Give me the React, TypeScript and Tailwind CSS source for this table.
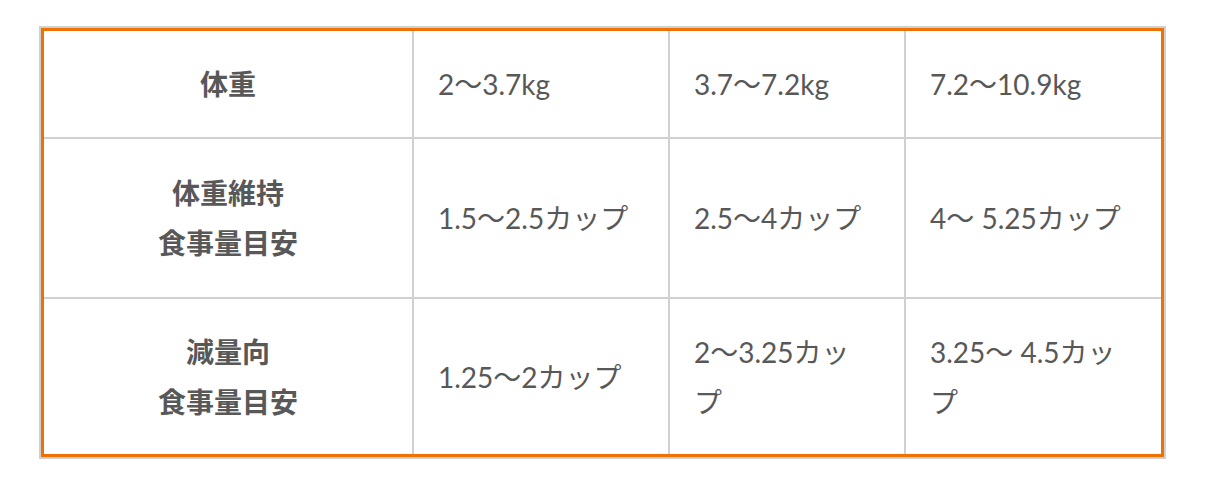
const rows = [
  { head: ["体重"], cells: ["2〜3.7kg", "3.7〜7.2kg", "7.2〜10.9kg"] },
  { head: ["体重維持", "食事量目安"], cells: ["1.5〜2.5カップ", "2.5〜4カップ", "4〜 5.25カップ"] },
  { head: ["減量向", "食事量目安"], cells: ["1.25〜2カップ", "2〜3.25カップ", "3.25〜 4.5カップ"] },
];

export default function App() {
  return (
    <div className="min-h-[500px] w-[1230px] bg-white pl-[39px] pt-[26px] font-['Lato','Noto_Sans_CJK_JP',sans-serif] text-[#585858]">
      <div className="w-[1127px] border-2 border-[#d0d0d0]">
        <div className="border-[3px] border-[#ee7203]">
          <div className="grid grid-cols-[368px_254px_234px_255px] grid-rows-[106px_158px_155px] gap-[2px] bg-[#d0d0d0]">
            {rows.map((row, i) => (
              <>
                <div key={`h${i}`} className="flex flex-col items-center justify-center bg-white text-center text-[28px] font-bold leading-[50px]">
                  {row.head.map((h) => (
                    <span key={h}>{h}</span>
                  ))}
                </div>
                {row.cells.map((c, j) => (
                  <div key={`c${i}${j}`} className="flex items-center bg-white pl-6 pr-[32px] text-[28px] leading-[50px]">
                    <p>{c}</p>
                  </div>
                ))}
              </>
            ))}
          </div>
        </div>
      </div>
    </div>
  );
}
